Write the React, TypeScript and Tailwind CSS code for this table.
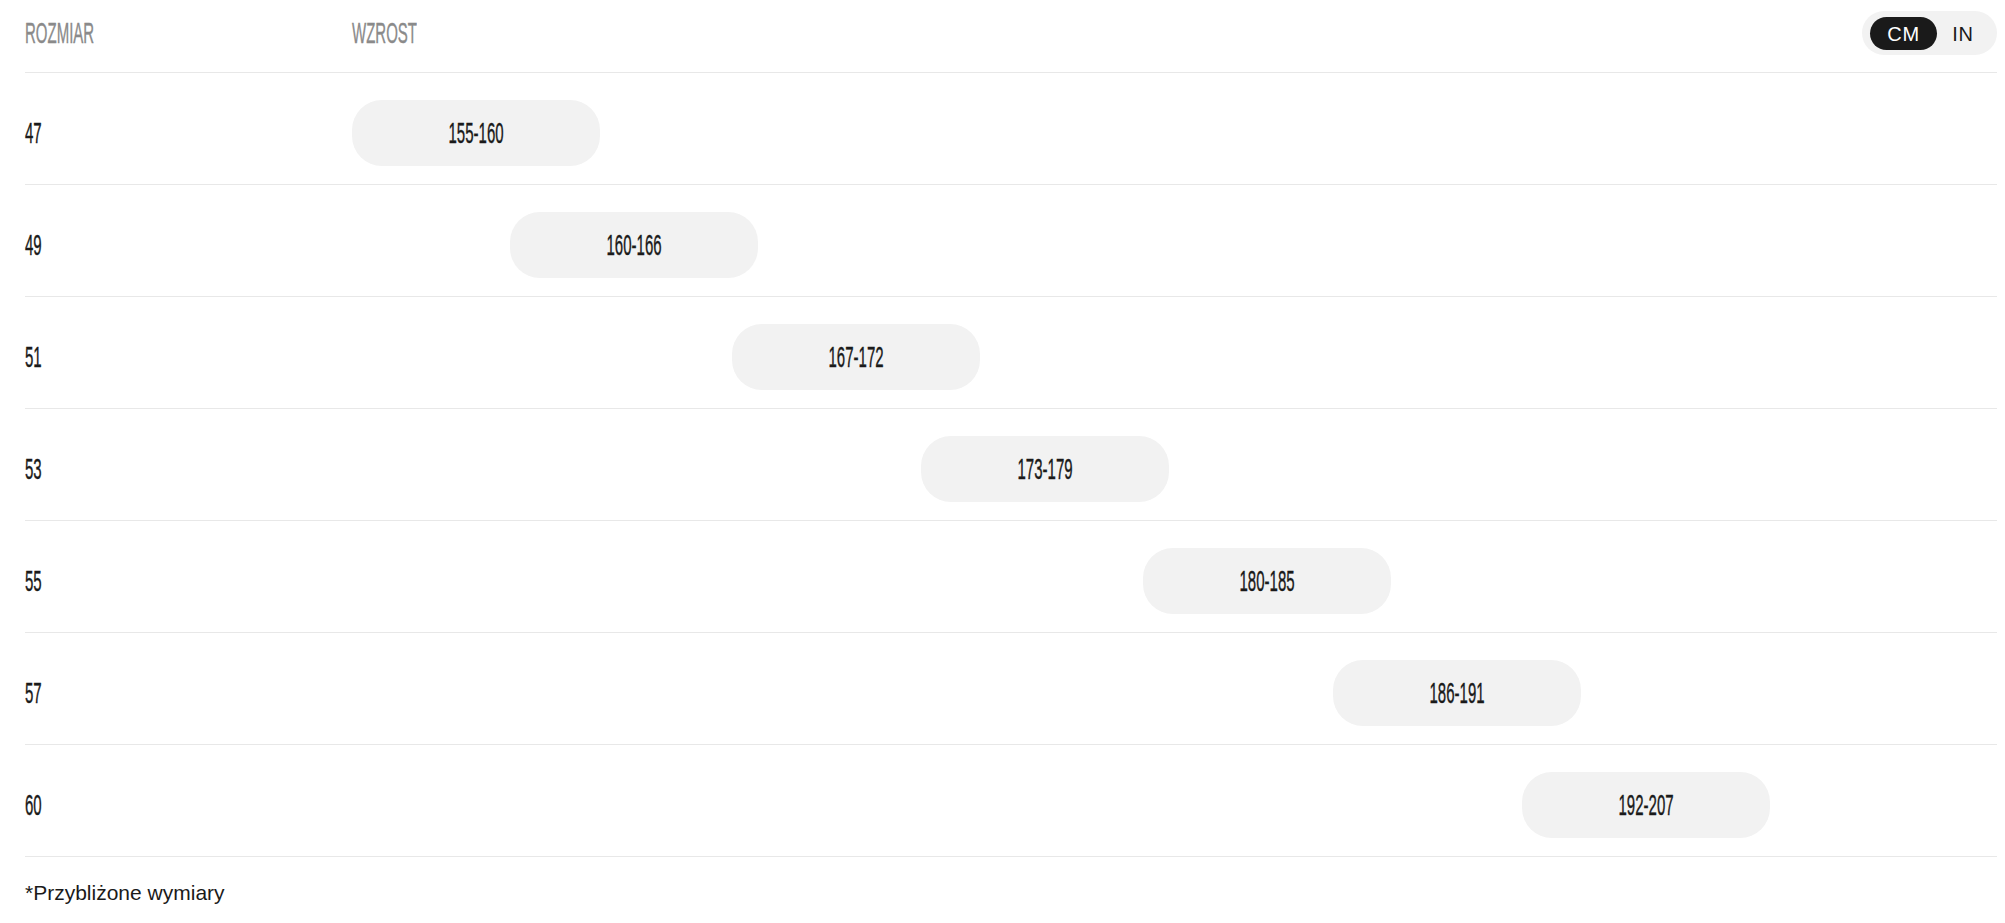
import { useState } from 'react';

const rozmiary = [
  { size: '47', od: 155, do: 160 },
  { size: '49', od: 160, do: 166 },
  { size: '51', od: 167, do: 172 },
  { size: '53', od: 173, do: 179 },
  { size: '55', od: 180, do: 185 },
  { size: '57', od: 186, do: 191 },
  { size: '60', od: 192, do: 207 },
];

// skala wzrostu dla wykresu
const MIN = 155;
const MAX = 207;

function Cond({ children, center }: { children: React.ReactNode; center?: boolean }) {
  return (
    <span
      className={`inline-block whitespace-nowrap scale-x-[0.5] font-normal text-[30px] leading-[34px] [-webkit-text-stroke:0.4px_currentColor] font-['Liberation_Sans',Arial,sans-serif] ${
        center ? 'origin-center' : 'origin-left'
      }`}
    >
      {children}
    </span>
  );
}

export default function App() {
  const [unit, setUnit] = useState<'cm' | 'in'>('cm');

  return (
    <div className="min-h-screen bg-white pl-[25px] pr-[8px] font-['Liberation_Sans',Arial,sans-serif]">
      {/* Nagłówek */}
      <div className="flex items-center pt-[11px] pb-[17px] border-b border-[#e8e8e8]">
        <div className="w-[327px] text-[#8a8a8a]">
          <Cond>ROZMIAR</Cond>
        </div>
        <div className="text-[#8a8a8a]">
          <Cond>WZROST</Cond>
        </div>
        <div className="ml-auto flex h-[44px] items-center rounded-full bg-[#f2f2f2] pl-[8px] pr-[8px] pt-[6px] pb-[5px]">
          <button
            onClick={() => setUnit('cm')}
            className={`h-[33px] w-[67px] rounded-full text-[20px] font-medium tracking-[0.04em] ${
              unit === 'cm' ? 'bg-[#1a1a1a] text-white' : 'text-[#1a1a1a]'
            }`}
          >
            CM
          </button>
          <button
            onClick={() => setUnit('in')}
            className={`h-[33px] w-[52px] rounded-full text-[20px] font-medium tracking-[0.04em] ${
              unit === 'in' ? 'bg-[#1a1a1a] text-white' : 'text-[#1a1a1a]'
            }`}
          >
            IN
          </button>
        </div>
      </div>

      {/* Wiersze */}
      {rozmiary.map((r) => {
        const left = ((r.od - MIN) / (MAX - MIN)) * 100;
        const label = unit === 'cm' ? `${r.od}-${r.do}` : `${Math.round(r.od / 2.54)}-${Math.round(r.do / 2.54)}`;
        return (
          <div key={r.size} className="flex items-center pt-[27px] pb-[18px] border-b border-[#e8e8e8]">
            <div className="w-[327px] text-[#1a1a1a]">
              <Cond>{r.size}</Cond>
            </div>
            <div className="flex-1">
              <div
                className="flex h-[66px] w-[248px] items-center justify-center rounded-[30px] bg-[#f2f2f2] text-[#1a1a1a]"
                style={{ marginLeft: `${left}%` }}
              >
                <Cond center>{label}</Cond>
              </div>
            </div>
          </div>
        );
      })}

      <p className="mt-[22px] text-[21px] leading-7 text-[#1a1a1a]">*Przybliżone wymiary</p>
    </div>
  );
}
